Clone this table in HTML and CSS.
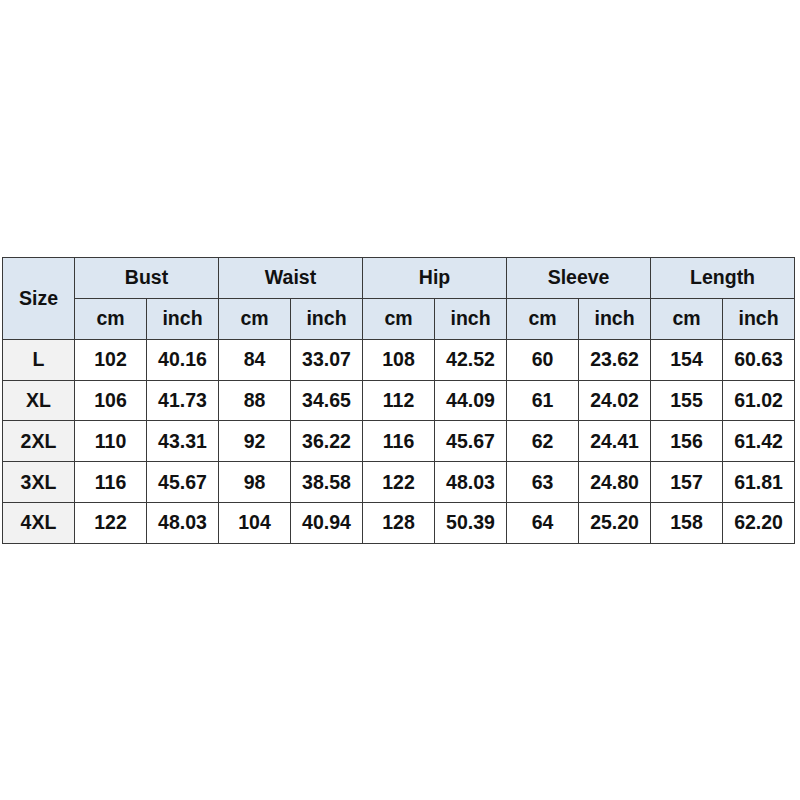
FILE: index.html
```html
<!DOCTYPE html>
<html>
<head>
<meta charset="utf-8">
<link rel="stylesheet" href="styles.css">
</head>
<body>
<div class="page">
<table class="chart">
  <colgroup>
    <col class="c-size"><col><col><col><col><col><col><col><col><col><col>
  </colgroup>
  <thead>
    <tr>
      <th class="size-h" rowspan="2">Size</th>
      <th colspan="2">Bust</th>
      <th colspan="2">Waist</th>
      <th colspan="2">Hip</th>
      <th colspan="2">Sleeve</th>
      <th colspan="2">Length</th>
    </tr>
    <tr>
      <th>cm</th><th>inch</th>
      <th>cm</th><th>inch</th>
      <th>cm</th><th>inch</th>
      <th>cm</th><th>inch</th>
      <th>cm</th><th>inch</th>
    </tr>
  </thead>
  <tbody>
    <tr><td class="size">L</td><td>102</td><td>40.16</td><td>84</td><td>33.07</td><td>108</td><td>42.52</td><td>60</td><td>23.62</td><td>154</td><td>60.63</td></tr>
    <tr><td class="size">XL</td><td>106</td><td>41.73</td><td>88</td><td>34.65</td><td>112</td><td>44.09</td><td>61</td><td>24.02</td><td>155</td><td>61.02</td></tr>
    <tr><td class="size">2XL</td><td>110</td><td>43.31</td><td>92</td><td>36.22</td><td>116</td><td>45.67</td><td>62</td><td>24.41</td><td>156</td><td>61.42</td></tr>
    <tr><td class="size">3XL</td><td>116</td><td>45.67</td><td>98</td><td>38.58</td><td>122</td><td>48.03</td><td>63</td><td>24.80</td><td>157</td><td>61.81</td></tr>
    <tr><td class="size">4XL</td><td>122</td><td>48.03</td><td>104</td><td>40.94</td><td>128</td><td>50.39</td><td>64</td><td>25.20</td><td>158</td><td>62.20</td></tr>
  </tbody>
</table>
</div>
</body>
</html>
```

FILE: styles.css
```css
html, body {
  margin: 0;
  padding: 0;
  background: #ffffff;
}

.page {
  padding: 257px 0 0 2px;
}

.chart {
  border-collapse: collapse;
  table-layout: fixed;
  width: 793px;
  font-family: "Liberation Sans", Arial, sans-serif;
  font-weight: bold;
  font-size: 19.5px;
  color: #111111;
}

.chart col {
  width: 72px;
}

.chart th,
.chart td {
  border: 1px solid #3a3a3a;
  height: 40.85px;
  padding: 0;
  text-align: center;
  vertical-align: middle;
  box-sizing: border-box;
}

.chart th {
  background: #dce6f1;
  font-weight: bold;
}

.chart td.size {
  background: #f2f2f2;
}
```
